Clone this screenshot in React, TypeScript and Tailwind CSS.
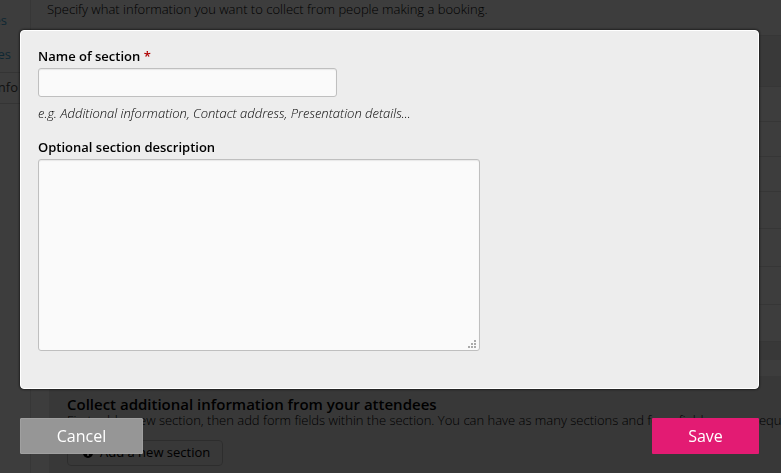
import { useState } from "react";

const NAV_ITEMS = [
    { label: "es", className: "h-[34px] pr-[23px] text-[#3d9cc8]" },
    { label: "es", className: "h-[34px] pr-[19px] text-[#3d9cc8]" },
    { label: "nfo", className: "h-8 border-y border-[#d0d0d0] pr-3 text-[#444]" },
];

function Sidebar() {
    return (
        <nav className="w-[31px] shrink-0 overflow-hidden border-r border-[#dcdcdc] pt-1">
            {NAV_ITEMS.map((item, i) => (
                <a key={i} href="#" className={`flex items-center justify-end ${item.className}`}>
                    {item.label}
                </a>
            ))}
        </nav>
    );
}

function FieldsTable() {
    return (
        <div className="mt-[17px] ml-4">
            <div className="h-[52px] border-y border-[#d8d8d8] bg-[#e4e4e4]" />
            <div className="h-[35px] border-b border-[#d8d8d8]" />
            <div className="h-[35px] border-b border-[#d8d8d8]" />
            <div className="h-[35px] border-b border-[#d8d8d8]" />
            <div className="h-[37px] border-b border-[#d8d8d8]" />
            <div className="h-[38px] border-b border-[#d8d8d8]" />
            <div className="h-[38px] border-b border-[#d8d8d8]" />
            <div className="h-[37px] border-b border-[#d8d8d8]" />
            <div className="h-[18px] bg-[#dedede]" />
        </div>
    );
}

function BookingPage() {
    return (
        <div className="flex h-screen overflow-hidden bg-[#f1f1f1] text-[13px] text-black">
            <Sidebar />
            <main className="min-w-0 flex-1">
                <p className="ml-4 leading-[18px] font-light">
                    Specify what information you want to collect from people making a booking.
                </p>
                <FieldsTable />
                <section className="mt-4 ml-[18px] h-32 bg-[#dedede] pt-5 pl-[18px] whitespace-nowrap">
                    <h2 className="text-[15px] leading-4 font-semibold">Collect additional information from your attendees</h2>
                    <p className="leading-4 font-light">
                        First add a new section, then add form fields within the section. You can have as many sections and form fields as you require.
                    </p>
                    <button className="mt-3 flex h-[26px] items-center gap-1 rounded-sm border border-[#b5b5b5] px-3 text-[13px]">
                        <svg viewBox="0 0 16 16" className="size-4" aria-hidden="true">
                            <circle cx="8" cy="8" r="5" fill="#000" />
                            <path d="M8 5v6M5 8h6" stroke="#dedede" strokeWidth="2" />
                        </svg>
                        Add a new section
                    </button>
                </section>
            </main>
        </div>
    );
}

function SectionDialog() {
    const [name, setName] = useState("");
    const [description, setDescription] = useState("");

    return (
        <form
            role="dialog"
            aria-label="Section"
            onSubmit={(e) => e.preventDefault()}
            className="fixed inset-0 overflow-hidden bg-black/75 pt-[30px] pr-[22px] pl-5"
        >
            <div className="rounded border border-white bg-[#ededed] px-[17px] pt-[15px] pb-[37px] text-[13px] text-black shadow-[0_0_3px_#000]">
                <label htmlFor="section-name" className="block leading-5 font-semibold">
                    Name of section <span className="text-[#b00000]">*</span>
                </label>
                <input
                    id="section-name"
                    value={name}
                    onChange={(e) => setName(e.target.value)}
                    className="mt-[2px] block h-[29px] w-[299px] rounded-[3px] border border-[#bfbfbf] bg-[#fafafa] px-2 shadow-[inset_0_1px_1px_#e8e8e8] outline-none"
                />
                <p className="mt-[6px] leading-5 font-light italic">
                    e.g. Additional information, Contact address, Presentation details...
                </p>

                <label htmlFor="section-description" className="mt-[14px] block leading-5 font-semibold">
                    Optional section description
                </label>
                <div className="relative mt-[2px] w-[442px]">
                    <textarea
                        id="section-description"
                        value={description}
                        onChange={(e) => setDescription(e.target.value)}
                        className="block h-48 w-full resize-none rounded-[3px] border border-[#bfbfbf] bg-[#fafafa] p-2 shadow-[inset_0_1px_1px_#e8e8e8] outline-none"
                    />
                    {/* Resize grip */}
                    <svg viewBox="0 0 8 8" className="pointer-events-none absolute right-1 bottom-[3px] size-2" fill="#aaa" aria-hidden="true">
                        <path d="M6 0h2v2H6zM3 3h2v2H3zM6 3h2v2H6zM0 6h2v2H0zM3 6h2v2H3zM6 6h2v2H6z" />
                    </svg>
                </div>
            </div>

            <div className="mt-[29px] flex justify-between text-[16px] text-white [text-shadow:0_1px_1px_rgba(0,0,0,0.35)]">
                <button type="button" className="h-9 w-[123px] rounded-[1px] border border-[#a0a0a0] bg-[#969696]">
                    Cancel
                </button>
                <button type="submit" className="h-9 w-[107px] rounded-[1px] bg-[#e31b73]">
                    Save
                </button>
            </div>
        </form>
    );
}

export default function App() {
    return (
        <div className="font-['Open_Sans',sans-serif]">
            <BookingPage />
            <SectionDialog />
        </div>
    );
}
